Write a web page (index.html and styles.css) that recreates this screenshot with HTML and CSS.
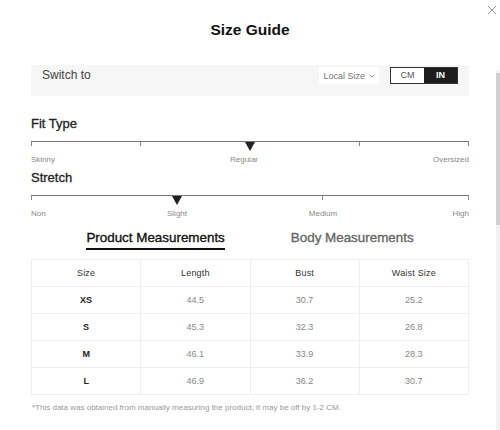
FILE: index.html
```html
<!DOCTYPE html>
<html lang="en">
<head>
  <meta charset="UTF-8">
  <title>Size Guide</title>
  <link rel="stylesheet" href="styles.css">
</head>
<body>
  <div class="modal">
    <button class="close" aria-label="Close">
      <svg width="10" height="10" viewBox="0 0 10 10"><path d="M1 1L9 9M9 1L1 9" stroke="#999" stroke-width="1" fill="none"/></svg>
    </button>
    <h2 class="title">Size Guide</h2>

    <div class="content">
      <div class="switch-bar">
        <span class="switch-label">Switch to</span>
        <div class="switch-tools">
          <div class="local-size">Local Size
            <svg width="6" height="4" viewBox="0 0 6 4"><path d="M0.5 0.5L3 3L5.5 0.5" stroke="#999" fill="none"/></svg>
          </div>
          <div class="unit-toggle">
            <span class="unit">CM</span>
            <span class="unit active">IN</span>
          </div>
        </div>
      </div>

      <h3 class="scale-title fit">Fit Type</h3>
      <div class="scale">
        <div class="track">
          <span class="tick"></span><span class="tick"></span><span class="tick"></span><span class="tick"></span><span class="tick"></span>
          <span class="marker" style="left: 50%"></span>
        </div>
        <div class="scale-labels">
          <span>Skinny</span><span>Regular</span><span>Oversized</span>
        </div>
      </div>

      <h3 class="scale-title">Stretch</h3>
      <div class="scale">
        <div class="track">
          <span class="tick"></span><span class="tick"></span><span class="tick"></span><span class="tick"></span>
          <span class="marker" style="left: 33.33%"></span>
        </div>
        <div class="scale-labels thirds">
          <span>Non</span><span>Slight</span><span>Medium</span><span>High</span>
        </div>
      </div>

      <div class="tabs">
        <span class="tab active">Product Measurements</span>
        <span class="tab">Body Measurements</span>
      </div>

      <table class="sizes">
        <thead>
          <tr><th>Size</th><th>Length</th><th class="split">Bust</th><th>Waist Size</th></tr>
        </thead>
        <tbody>
          <tr><td class="size">XS</td><td>44.5</td><td class="split">30.7</td><td>25.2</td></tr>
          <tr><td class="size">S</td><td>45.3</td><td class="split">32.3</td><td>26.8</td></tr>
          <tr><td class="size">M</td><td>46.1</td><td class="split">33.9</td><td>28.3</td></tr>
          <tr><td class="size">L</td><td>46.9</td><td class="split">36.2</td><td>30.7</td></tr>
        </tbody>
      </table>

      <p class="note">*This data was obtained from manually measuring the product, it may be off by 1-2 CM.</p>
    </div>

    <div class="scrollbar"><div class="thumb"></div></div>
  </div>
</body>
</html>
```

FILE: styles.css
```css
body {
  margin: 0;
  background: #fff;
  font-family: "Liberation Sans", Arial, sans-serif;
  color: #222;
}
.modal {
  position: relative;
  width: 500px;
  height: 430px;
  overflow: hidden;
}
.close {
  position: absolute;
  top: 3px;
  right: 3px;
  border: none;
  background: none;
  padding: 0;
  width: 10px;
  height: 10px;
}
.title {
  margin: 0;
  padding-top: 21px;
  height: 44px;
  text-align: center;
  font-size: 15.5px;
  line-height: 18px;
  font-weight: bold;
  color: #111;
}
.content {
  padding: 0 31px;
}
.switch-bar {
  display: flex;
  justify-content: space-between;
  align-items: flex-start;
  height: 31px;
  padding: 2px 11px 0 11px;
  box-sizing: border-box;
  background: #f6f6f6;
}
.switch-label {
  font-size: 12px;
  line-height: 17px;
  color: #444;
}
.switch-tools {
  display: flex;
  gap: 11px;
}
.local-size {
  display: flex;
  align-items: center;
  gap: 4px;
  height: 17px;
  padding: 0 4px;
  background: #fff;
  font-size: 9px;
  color: #777;
}
.unit-toggle {
  display: flex;
  border: 1px solid #333;
  height: 15px;
}
.unit {
  width: 33px;
  text-align: center;
  font-size: 9px;
  line-height: 15px;
  color: #555;
  background: #fff;
}
.unit.active {
  background: #1d1d1d;
  color: #fff;
  font-weight: bold;
}
.scale-title {
  margin: 0;
  font-size: 13px;
  line-height: 16px;
  font-weight: normal;
  color: #222;
  -webkit-text-stroke: 0.3px #222;
}
.scale-title.fit {
  margin-top: 20px;
}
.scale {
  margin-top: 9px;
}
.track {
  position: relative;
  height: 5px;
  border-top: 1px solid #777;
  display: flex;
  justify-content: space-between;
}
.tick {
  width: 1px;
  height: 4px;
  background: #888;
}
.marker {
  position: absolute;
  top: 0;
  margin-left: -5px;
  width: 0;
  height: 0;
  border-left: 5px solid transparent;
  border-right: 5px solid transparent;
  border-top: 9px solid #222;
}
.scale-labels {
  display: flex;
  justify-content: space-between;
  margin-top: 8px;
  height: 15px;
  font-size: 8px;
  line-height: 10px;
  color: #888;
}
.scale-labels.thirds {
  display: grid;
  grid-template-columns: 1fr 2fr 2fr 1fr;
}
.scale-labels.thirds span:nth-child(2),
.scale-labels.thirds span:nth-child(3) {
  text-align: center;
}
.scale-labels.thirds span:last-child {
  text-align: right;
}
.tabs {
  display: flex;
  justify-content: center;
  gap: 66px;
  margin-top: 6px;
  height: 29px;
}
.tab {
  font-size: 13.4px;
  line-height: 16px;
  height: 18px;
  color: #666;
  -webkit-text-stroke: 0.35px #666;
}
.tab.active {
  color: #111;
  -webkit-text-stroke: 0.35px #111;
  border-bottom: 2px solid #111;
}
.sizes {
  width: 438px;
  border-collapse: collapse;
  table-layout: fixed;
}
.sizes th,
.sizes td {
  border: 1px solid #eee;
  height: 26px;
  padding: 0;
  text-align: center;
  font-size: 9px;
  font-weight: normal;
}
.sizes th {
  color: #333;
  letter-spacing: 0.2px;
}
.sizes td {
  color: #888;
}
.sizes td.size {
  color: #222;
  font-weight: bold;
}
.sizes .split {
  border-left-color: #ddd;
}
.note {
  margin: 8px 0 0 1px;
  font-size: 8px;
  color: #999;
}
.scrollbar {
  position: absolute;
  right: 0;
  top: 70px;
  bottom: 0;
  width: 4px;
  background: #f2f2f2;
}
.thumb {
  margin-top: 3px;
  height: 152px;
  background: #cfcfcf;
}
```
